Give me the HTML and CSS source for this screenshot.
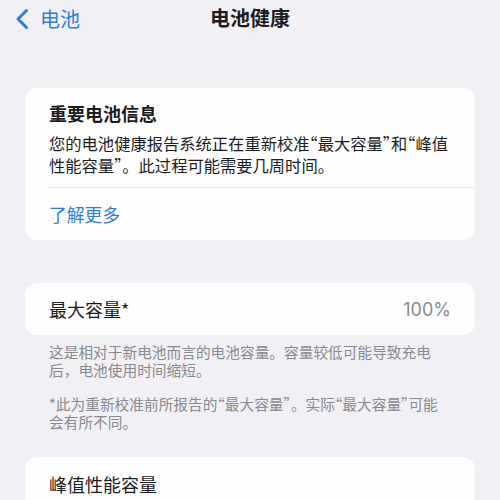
FILE: index.html
```html
<!DOCTYPE html>
<html lang="zh-CN">
<head>
    <meta charset="UTF-8">
    <meta name="viewport" content="width=device-width, initial-scale=1.0">
    <title>电池健康</title>
    <link rel="stylesheet" href="styles.css">
</head>
<body>
    <header class="nav">
        <a class="back" href="#">
            <svg class="chevron" width="14" height="22" viewBox="0 0 14 22">
                <polyline points="11.5,2.5 3,11 11.5,19.5" />
            </svg>
            <span>电池</span>
        </a>
        <h1 class="nav-title">电池健康</h1>
    </header>

    <main class="content">
        <section class="card info">
            <div class="info-body">
                <h2 class="card-title">重要电池信息</h2>
                <p class="info-text">您的电池健康报告系统正在重新校准<q>最大容量</q>和<q>峰值性能容量</q>。此过程可能需要几周时间。</p>
            </div>
            <a class="link-row" href="#">了解更多</a>
        </section>

        <section class="card row">
            <span class="row-label">最大容量*</span>
            <span class="row-value">100%</span>
        </section>
        <div class="footnote">
            <p>这是相对于新电池而言的电池容量。容量较低可能导致充电后，电池使用时间缩短。</p>
            <p>*此为重新校准前所报告的<q>最大容量</q>。实际<q>最大容量</q>可能会有所不同。</p>
        </div>

        <section class="card peak">
            <span class="row-label">峰值性能容量</span>
        </section>
    </main>
</body>
</html>
```

FILE: styles.css
```css
body {
    margin: 0;
    background: #f0f0f5;
    font-family: "Noto Sans CJK SC", "Noto Sans", sans-serif;
    color: #1c1c1e;
    height: 500px;
    overflow: hidden;
}

/* Top navigation bar */
.nav {
    position: relative;
    height: 36px;
    display: flex;
    align-items: center;
    justify-content: center;
}

.back {
    position: absolute;
    left: 15px;
    top: 7px;
    display: flex;
    align-items: center;
    gap: 11px;
    color: #2f7dd8;
    text-decoration: none;
    font-size: 20px;
    line-height: 24px;
}

.chevron polyline {
    fill: none;
    stroke: #2f7dd8;
    stroke-width: 3;
    stroke-linecap: round;
    stroke-linejoin: round;
}

.nav-title {
    margin: 0;
    font-size: 20px;
    font-weight: 700;
    line-height: 24px;
}

.content {
    padding: 52px 25px 0;
}

/* Chinese quotes, set half width like the system font does */
q {
    quotes: "“" "”";
}

q::before,
q::after {
    font-feature-settings: "halt";
}

.card {
    background: #fefefe;
    border-radius: 12px;
}

.card-title {
    margin: 0;
    font-size: 18px;
    font-weight: 700;
    line-height: 24px;
}

.info-body {
    margin-left: 24px;
    padding: 13px 18px 11px 0;
    border-bottom: 1px solid #e4e4e8;
}

.info-text {
    margin: 7px 0 0;
    font-size: 16.3px;
    line-height: 22px;
}

.link-row {
    display: flex;
    align-items: center;
    height: 52px;
    padding: 0 24px;
    color: #2f7dd8;
    font-size: 17.8px;
    text-decoration: none;
}

.row {
    margin-top: 43px;
    height: 52px;
    display: flex;
    align-items: center;
    justify-content: space-between;
    padding: 0 24px;
}

.row-label {
    font-size: 18px;
}

.row-value {
    color: #8a8a8e;
    font-family: "Inter", "Noto Sans", sans-serif;
    font-size: 18px;
}

.footnote {
    padding: 8px 24px 0;
    color: #8a8a8e;
    font-size: 14.7px;
    line-height: 17.5px;
}

.footnote p {
    margin: 0 0 17px;
}

.peak {
    margin-top: 27px;
    height: 60px;
    padding: 14px 24px 0;
    box-sizing: border-box;
}
```
